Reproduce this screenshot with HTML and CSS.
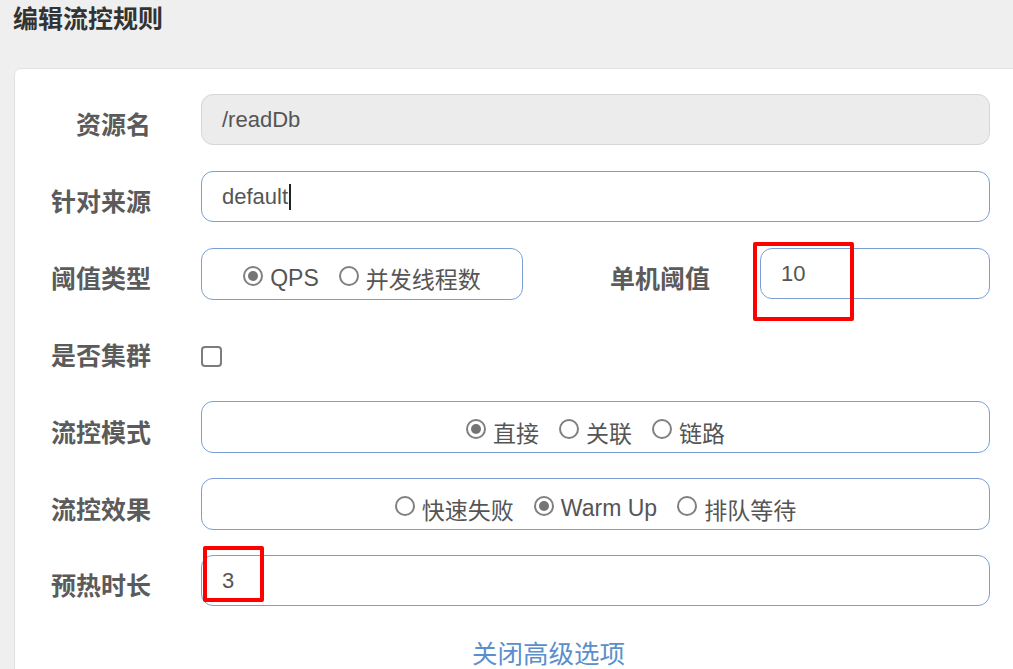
FILE: index.html
```html
<!DOCTYPE html>
<html lang="zh">
<head>
<meta charset="utf-8">
<title>编辑流控规则</title>
<link rel="stylesheet" href="styles.css">
</head>
<body>
<div class="page">
  <h1 class="title">编辑流控规则</h1>
  <div class="card">
    <div class="form">
      <div class="row">
        <div class="label">资源名</div>
        <div class="field field-disabled">/readDb</div>
      </div>
      <div class="row">
        <div class="label">针对来源</div>
        <div class="field">default<span class="caret"></span></div>
      </div>
      <div class="row">
        <div class="label">阈值类型</div>
        <div class="split">
          <div class="radio-box radio-box-small">
            <span class="radio checked"></span><span class="rtext">QPS</span>
            <span class="radio"></span><span class="rtext">并发线程数</span>
          </div>
          <div class="label label-inline">单机阈值</div>
          <div class="field field-small">10<span class="mark mark-one"></span></div>
        </div>
      </div>
      <div class="row row-check">
        <div class="label">是否集群</div>
        <div class="control-check"><span class="checkbox"></span></div>
      </div>
      <div class="row">
        <div class="label">流控模式</div>
        <div class="radio-box">
          <span class="radio checked"></span><span class="rtext">直接</span>
          <span class="radio"></span><span class="rtext">关联</span>
          <span class="radio"></span><span class="rtext">链路</span>
        </div>
      </div>
      <div class="row">
        <div class="label">流控效果</div>
        <div class="radio-box">
          <span class="radio"></span><span class="rtext">快速失败</span>
          <span class="radio checked"></span><span class="rtext">Warm Up</span>
          <span class="radio"></span><span class="rtext">排队等待</span>
        </div>
      </div>
      <div class="row">
        <div class="label">预热时长</div>
        <div class="field">3<span class="mark mark-two"></span></div>
      </div>
    </div>
    <div class="more"><a class="more-link">关闭高级选项</a></div>
  </div>
</div>
</body>
</html>
```

FILE: styles.css
```css
html, body {
  margin: 0;
  padding: 0;
  background: #efefef;
  overflow: hidden;
  height: 100%;
}
body {
  font-family: "Liberation Sans", "Noto Sans CJK SC", sans-serif;
  color: #555;
}
.page {
  width: 1013px;
  height: 669px;
  overflow: hidden;
}
.title {
  margin: 0;
  padding: 0 13px;
  font-family: "Noto Sans CJK SC", sans-serif;
  font-size: 25px;
  font-weight: 700;
  line-height: 34px;
  color: #333;
}
.card {
  margin: 34px -20px 0 14px;
  background: #fff;
  border: 1px solid #e2e2e2;
  border-radius: 7px;
  padding: 25px 42px 40px 0;
  height: 640px;
  box-sizing: border-box;
}
.form {
  display: flex;
  flex-direction: column;
  gap: 26px;
}
.row {
  display: grid;
  grid-template-columns: 136px 1fr;
  column-gap: 50px;
  align-items: center;
  height: 51px;
}
.row-check {
  height: 50px;
}
.label {
  text-align: right;
  font-family: "Noto Sans CJK SC", sans-serif;
  font-weight: 700;
  font-size: 25px;
  color: #5b5b5b;
  padding-top: 7px;
  line-height: 36px;
  white-space: nowrap;
}
.field {
  position: relative;
  height: 51px;
  box-sizing: border-box;
  border: 1px solid #7a9fd6;
  border-radius: 12px;
  padding: 0 20px;
  display: flex;
  align-items: center;
  font-size: 22px;
  color: #555;
  background: #fff;
}
.field-disabled {
  background: #ececec;
  border-color: #d6d6d6;
}
.caret {
  display: inline-block;
  width: 2px;
  height: 26px;
  background: #222;
  margin-left: 1px;
}
.split {
  display: flex;
  align-items: center;
  height: 51px;
}
.label-inline {
  flex: 1;
  padding-right: 50px;
}
.field-small {
  width: 230px;
  flex: none;
}
.radio-box {
  height: 52px;
  box-sizing: border-box;
  border: 1px solid #7a9fd6;
  border-radius: 12px;
  display: flex;
  align-items: center;
  justify-content: center;
  padding-top: 9px;
  font-size: 23px;
  color: #555;
}
.radio-box-small {
  width: 322px;
  flex: none;
}
.radio {
  width: 20px;
  height: 20px;
  box-sizing: border-box;
  border: 2px solid #808080;
  border-radius: 50%;
  margin: 0 7px 5px 0;
  position: relative;
  flex: none;
  background: #fff;
}
.radio.checked::after {
  content: "";
  position: absolute;
  left: 3px;
  top: 3px;
  width: 10px;
  height: 10px;
  border-radius: 50%;
  background: #757575;
}
.rtext {
  margin-right: 20px;
  font-family: "Liberation Sans", "Noto Sans CJK SC", sans-serif;
}
.rtext:last-child {
  margin-right: 0;
}
.control-check {
  display: flex;
  align-items: center;
  padding-top: 12px;
}
.checkbox {
  width: 21px;
  height: 21px;
  box-sizing: border-box;
  border: 2px solid #7c7c7c;
  border-radius: 4px;
  background: #fff;
}
.mark {
  position: absolute;
  border: 4px solid #ff0000;
  border-radius: 2px;
  box-sizing: border-box;
}
.mark-one {
  left: -8px;
  top: -7px;
  width: 101px;
  height: 79px;
}
.mark-two {
  left: 1px;
  top: -10px;
  width: 61px;
  height: 56px;
}
.more {
  margin-top: 30px;
  padding-left: 92px;
  text-align: center;
  line-height: 32px;
}
.more-link {
  font-family: "Noto Sans CJK SC", sans-serif;
  font-size: 25.5px;
  color: #5a8fcc;
  cursor: pointer;
}
```
